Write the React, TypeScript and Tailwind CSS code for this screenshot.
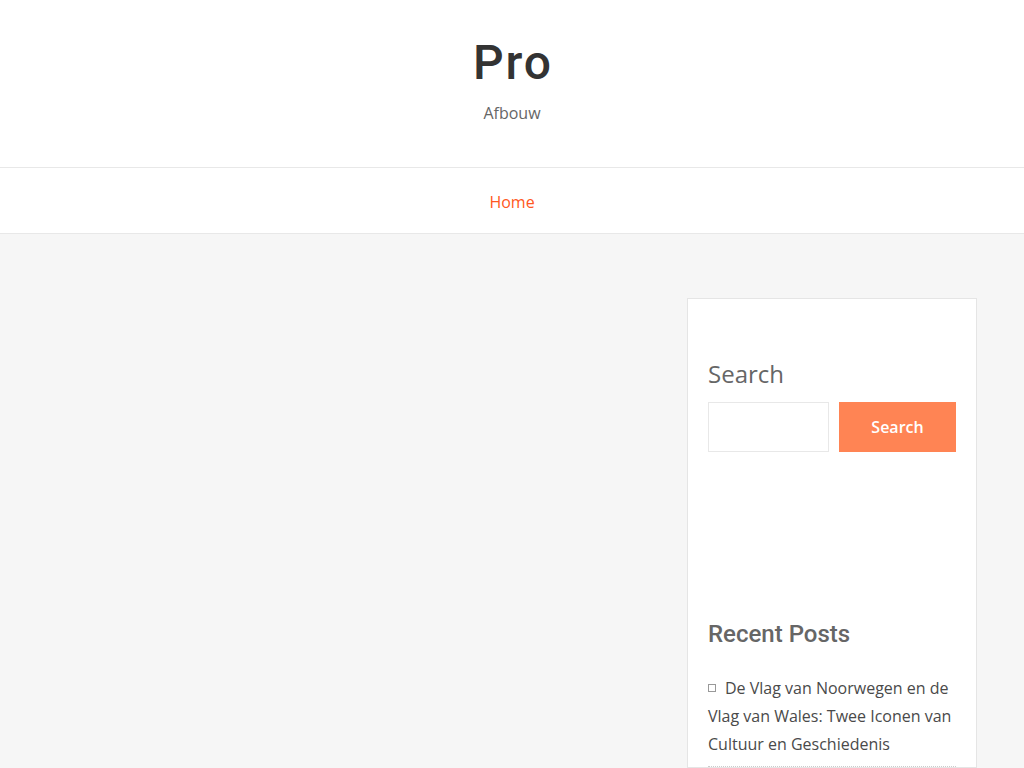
export default function App() {
  return (
    <div className="min-h-screen bg-[#f6f6f6] font-['Open_Sans',sans-serif]">
      <header className="bg-white">
        <div className="flex h-[167px] flex-col items-center pt-[33px]">
          <h1 className="font-['Roboto',sans-serif] text-[48px] font-medium leading-[60px] tracking-[2px] pl-[2px] text-[#333]">
            Pro
          </h1>
          <p className="mt-[9px] text-[16px] leading-[22px] text-[#666]">Afbouw</p>
        </div>
        <nav className="flex h-[67px] items-center justify-center border-t border-b border-[#e8e8e8] pt-[2px]">
          <a className="text-[16px] text-[#ff5722]" href="#">
            Home
          </a>
        </nav>
      </header>

      <div className="flex justify-end pr-[47px] pt-[64px]">
        <aside className="w-[290px] border border-[#e5e5e5] bg-white px-[20px] pt-[57px]">
          <section>
            <h2 className="text-[24px] leading-[36px] font-normal text-[#666]">Search</h2>
            <form className="mt-[10px] flex gap-[10px]" onSubmit={(e) => e.preventDefault()}>
              <input
                type="text"
                className="h-[50px] w-[121px] border border-[#e8e8e8] bg-white px-2 outline-none"
              />
              <button
                type="submit"
                className="h-[50px] w-[117px] bg-[#ff8454] text-[16px] font-semibold text-white"
              >
                Search
              </button>
            </form>
          </section>

          <section className="mt-[164px]">
            <h2 className="font-['Roboto',sans-serif] text-[24px] font-medium leading-[36px] text-[#666]">
              Recent Posts
            </h2>
            <ul className="mt-[22px]">
              <li className="border-b border-dotted border-[#ccc] pb-[8px] text-[16px] leading-[28px] text-[#4a4a4a]">
                <span className="mr-[9px] inline-block h-[8px] w-[8px] border border-[#999] align-[2px]" />
                <a href="#">
                  De Vlag van Noorwegen en de Vlag van Wales: Twee Iconen van Cultuur en Geschiedenis
                </a>
              </li>
            </ul>
          </section>
        </aside>
      </div>
    </div>
  );
}
